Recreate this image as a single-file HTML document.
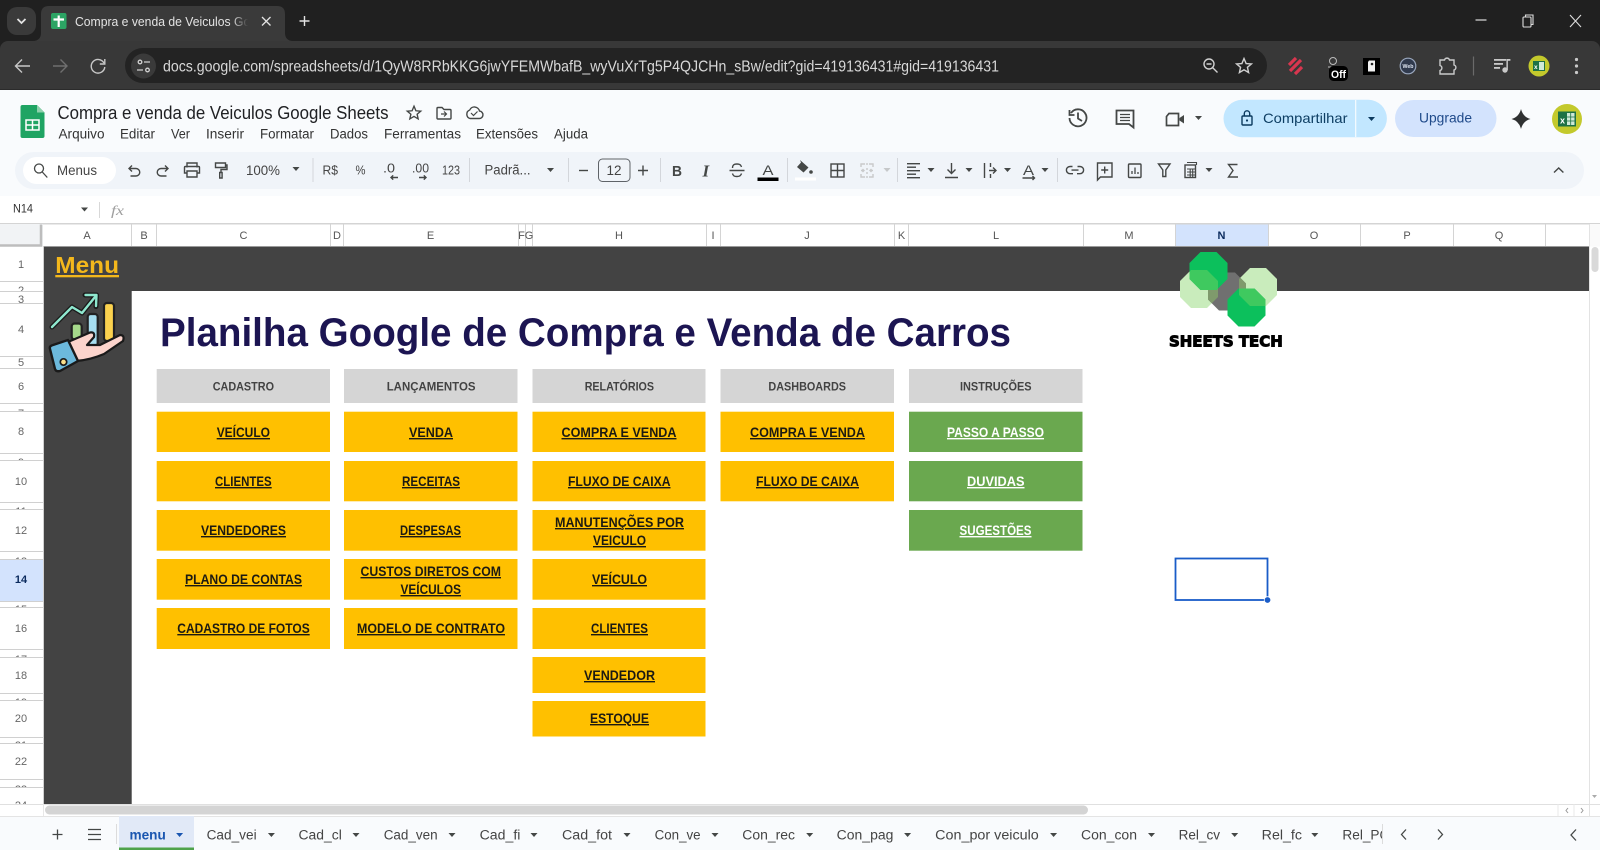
<!DOCTYPE html>
<html lang="pt-BR"><head><meta charset="utf-8"><title>Compra e venda de Veiculos Google Sheets</title>
<style>
html,body{margin:0;padding:0;width:1600px;height:850px;overflow:hidden;background:#fff}
svg{display:block}
text{font-family:"Liberation Sans",sans-serif}
.ch{font-size:11px;fill:#555;text-anchor:middle}
.rn{font-size:11px;fill:#666;text-anchor:middle}
.c{font-size:14px;font-weight:700;fill:#1c1a12;text-decoration:underline}
.g{font-size:12px;font-weight:700;fill:#434343}
.w{font-size:14px;font-weight:700;fill:#fff;text-decoration:underline}
.m{font-size:13.5px;fill:#333}
.t{font-size:13.5px;fill:#444}
.tb{font-size:13px;fill:#444}
.i{fill:none;stroke:#444746;stroke-width:1.4}
.d{fill:none;stroke:#c9cacb;stroke-width:1.4}
.ar{fill:#444746}
</style></head><body>
<svg width="1600" height="850" viewBox="0 0 1600 850" xmlns="http://www.w3.org/2000/svg">
<defs>
<path id="star" d="M0-8.500 2.400-2.800 8.400-2.300 3.900 1.500 5.200 7.400 0 4.300-5.200 7.400-3.900 1.500-8.400-2.300-2.400-2.800Z"/>
<path id="da" d="M-3.500-2H3.500L0 2Z"/>
<polygon id="oct" points="-19,-8 -8,-19 8,-19 19,-8 19,8 8,19 -8,19 -19,8"/>
<clipPath id="tabclip"><rect x="70" y="6" width="178" height="30"/></clipPath>
<clipPath id="sheetclip"><rect x="1330" y="816" width="52" height="34"/></clipPath>
<clipPath id="cTop"><use href="#oct" x="1208.500" y="271"/></clipPath>
<clipPath id="cBot"><use href="#oct" x="1246.500" y="307.500"/></clipPath>
<clipPath id="cGray"><use href="#oct" x="1227" y="291.500"/></clipPath>
<linearGradient id="fade" x1="0" x2="1"><stop offset="0" stop-color="#3a3a3a" stop-opacity="0"/><stop offset="1" stop-color="#3a3a3a"/></linearGradient>
</defs>

<!-- browser chrome -->
<rect width="1600" height="90" fill="#202020"/>
<rect y="41" width="1600" height="49" rx="8" fill="#383838"/>
<rect y="60" width="1600" height="30" fill="#383838"/>
<rect y="89" width="1600" height="1" fill="#2b2b2b"/>
<path d="M33 41C38 41 41 38 41 33V14Q41 6 49 6H277Q285 6 285 14V33C285 38 288 41 293 41Z" fill="#3a3a3a"/>
<rect x="7" y="7" width="29" height="28" rx="10" fill="#3a3a3a"/>
<path d="M17.500 19l4 4 4-4" fill="none" stroke="#e3e3e3" stroke-width="1.800"/>
<rect x="51" y="13" width="15.500" height="16" rx="2" fill="#2ca464"/>
<path d="M58.700 15.500V27M53.500 19.500H64" stroke="#fff" stroke-width="2.200"/>
<g clip-path="url(#tabclip)"><text x="75" y="26" font-size="13" fill="#e3e3e3" textLength="182" lengthAdjust="spacingAndGlyphs">Compra e venda de Veiculos Goo</text></g>
<rect x="232" y="8" width="16" height="26" fill="url(#fade)"/>
<path d="M262 17l8.500 8.500m0-8.500l-8.500 8.500" stroke="#e3e3e3" stroke-width="1.300"/>
<path d="M304.500 16v10m-5-5h10" stroke="#e3e3e3" stroke-width="1.400"/>
<path d="M1475.500 20h11" stroke="#ddd" stroke-width="1.200"/>
<g fill="none" stroke="#ddd" stroke-width="1.100"><rect x="1523" y="17" width="8" height="10" rx="1"/><path d="M1525.500 17v-2h7.500v9.500h-2"/><path d="M1570 15l11 12m0-12l-11 12"/></g>

<g fill="none" stroke="#c7c7c7" stroke-width="1.400"><path d="M30 66H16m6-6.500L15.500 66l6.500 6.500"/></g>
<g fill="none" stroke="#6f6f6f" stroke-width="1.400"><path d="M53 66h13.500m-6-6.500l6.500 6.500-6.500 6.500"/></g>
<g fill="none" stroke="#c7c7c7" stroke-width="1.400"><path d="M104 63a6.800 6.800 0 1 0 .8 4"/><path d="M104.800 59v5h-5"/></g>
<rect x="125" y="48" width="1142" height="35" rx="17.500" fill="#232323"/>
<circle cx="143.500" cy="66" r="12.500" fill="#3a3a3a"/>
<g fill="none" stroke="#d0d0d0" stroke-width="1.300"><circle cx="140" cy="62" r="1.800"/><path d="M144 62h6M137 70h6"/><circle cx="147.500" cy="70" r="1.800"/></g>
<text x="163" y="71.500" font-size="16" fill="#d8d8d8" textLength="836" lengthAdjust="spacingAndGlyphs">docs.google.com/spreadsheets/d/1QyW8RRbKKG6jwYFEMWbafB_wyVuXrTg5P4QJCHn_sBw/edit?gid=419136431#gid=419136431</text>
<g fill="none" stroke="#d0d0d0" stroke-width="1.400"><circle cx="1209" cy="64" r="5"/><path d="M1212.500 67.500l5 5M1206.500 64h5"/></g>
<g transform="translate(1244 66) scale(.88)"><use href="#star" fill="none" stroke="#d0d0d0" stroke-width="1.600"/></g>
<!-- extensions -->
<g fill="none" stroke="#d8364f" stroke-width="3.200"><path d="M1289 65l7-7M1290 71l11-11M1295 74l7-7"/></g>
<g fill="none" stroke="#bbb" stroke-width="1"><circle cx="1333" cy="61" r="3.500"/><path d="M1328 67h10"/></g>
<rect x="1329" y="66" width="19" height="15" rx="4.500" fill="#000"/>
<text x="1331" y="78" font-size="11" font-weight="700" fill="#fff" textLength="15" lengthAdjust="spacingAndGlyphs">Off</text>
<rect x="1363" y="58" width="17" height="17" fill="#000"/>
<path d="M1369 60.500h6v11h-7v-9.500z" fill="#f2f2f2"/><circle cx="1372" cy="64" r="1.300" fill="#222"/>
<circle cx="1408" cy="66" r="7.800" fill="#303a4d" stroke="#9aa7bd" stroke-width="1.200"/>
<text x="1402.500" y="68" font-size="5" font-weight="700" fill="#dfe6f2" textLength="11" lengthAdjust="spacingAndGlyphs">Web</text>
<path class="d" transform="translate(0 -1)" d="M1440 61h4.500a2.600 2.600 0 0 1 5 0h4.500v5a2.600 2.600 0 0 1 0 5v4h-14v-3.500a2.600 2.600 0 0 0 0-5z"/>
<path d="M1473.500 56.500v19" stroke="#6a6a6a" stroke-width="1.200"/>
<g fill="#c9c9c9"><rect x="1494" y="59" width="12" height="1.800"/><rect x="1494" y="63" width="9" height="1.800"/><rect x="1494" y="67" width="6" height="1.800"/><circle cx="1505" cy="70" r="2.700"/><rect x="1506.400" y="59" width="1.500" height="11"/><rect x="1506.400" y="59" width="4" height="1.800"/></g>
<circle cx="1539" cy="66" r="10.500" fill="#c3c92c"/><rect x="1533" y="61" width="12" height="10" fill="#1e7145"/><rect x="1539" y="62" width="5" height="8" fill="#cfe9d7"/><text x="1534" y="69" font-size="6.500" font-weight="700" fill="#fff">x</text>
<g fill="#c9c9c9"><circle cx="1576.500" cy="59.500" r="1.600"/><circle cx="1576.500" cy="66" r="1.600"/><circle cx="1576.500" cy="72.500" r="1.600"/></g>

<!-- sheets header -->
<rect y="90" width="1600" height="106" fill="#f9fbfd"/>
<path d="M22.500 105H37l7.500 7.500V136a2 2 0 0 1-2 2H22.500a2 2 0 0 1-2-2V107a2 2 0 0 1 2-2z" fill="#1fa463"/>
<path d="M37 105v7.500h7.500z" fill="#8ed1ac"/>
<g fill="none" stroke="#fff" stroke-width="1.500"><rect x="26" y="120" width="13" height="10"/><path d="M32.500 120v10M26 125h13"/></g>
<text x="57.500" y="119" font-size="18" fill="#202124" textLength="331" lengthAdjust="spacingAndGlyphs">Compra e venda de Veiculos Google Sheets</text>
<g transform="translate(414 113) scale(.8)"><use href="#star" fill="none" stroke="#444746" stroke-width="1.700"/></g>
<g class="i"><path d="M438 107.500h4l2 2h6a1 1 0 0 1 1 1v7.500a1 1 0 0 1-1 1h-12a1 1 0 0 1-1-1v-9.500a1 1 0 0 1 1-1z"/><path d="M441 114h5m-2-2.500l2.500 2.500-2.500 2.500" stroke-width="1.200"/></g>
<g class="i"><path d="M470 118.500h9a3.700 3.700 0 0 0 .5-7.400 5.200 5.200 0 0 0-9.800-1.100A4.500 4.500 0 0 0 470 118.500z"/><path d="M471 113l2.500 2.500 4-4" stroke-width="1.200"/></g>
<text class="m" x="58.500" y="138.500" textLength="46" lengthAdjust="spacingAndGlyphs">Arquivo</text>
<text class="m" x="120" y="138.500" textLength="35" lengthAdjust="spacingAndGlyphs">Editar</text>
<text class="m" x="171" y="138.500" textLength="19" lengthAdjust="spacingAndGlyphs">Ver</text>
<text class="m" x="206" y="138.500" textLength="38" lengthAdjust="spacingAndGlyphs">Inserir</text>
<text class="m" x="260" y="138.500" textLength="54" lengthAdjust="spacingAndGlyphs">Formatar</text>
<text class="m" x="330" y="138.500" textLength="38" lengthAdjust="spacingAndGlyphs">Dados</text>
<text class="m" x="384" y="138.500" textLength="77" lengthAdjust="spacingAndGlyphs">Ferramentas</text>
<text class="m" x="476" y="138.500" textLength="62" lengthAdjust="spacingAndGlyphs">Extensões</text>
<text class="m" x="554" y="138.500" textLength="34" lengthAdjust="spacingAndGlyphs">Ajuda</text>

<!-- top right -->
<g fill="none" stroke="#444746" stroke-width="1.800"><path d="M1071 113A8.500 8.500 0 1 1 1069.500 118"/><path d="M1069.500 110v5h5M1078 112.500v6l4 2.500"/></g>
<g fill="none" stroke="#444746" stroke-width="1.800"><path d="M1116.500 110.500H1133.500V127.500L1129 124H1116.500Z"/><path d="M1120 114.500h10M1120 117.500h10M1120 120.500h10" stroke-width="1.300"/></g>
<path d="M1169 113.500h9.500v12h-12v-9z" fill="none" stroke="#444746" stroke-width="1.700"/><path d="M1179.500 118l4.500-3v8.500l-4.500-3z" fill="#444746"/>
<use href="#da" x="1198.500" y="118" class="ar"/>
<path d="M1223.500 118.500a18.700 18.700 0 0 1 18.700-18.700h126a18.700 18.700 0 0 1 18.700 18.700 18.700 18.700 0 0 1-18.700 18.700h-126a18.700 18.700 0 0 1-18.700-18.700z" fill="#c2e7ff"/>
<rect x="1355" y="100" width="1.300" height="37" fill="#f2faff"/>
<rect x="1242" y="116" width="10" height="9" rx="1" fill="none" stroke="#0b3a5e" stroke-width="1.400"/><path d="M1244.300 116v-2.500a2.700 2.700 0 0 1 5.400 0v2.500" fill="none" stroke="#0b3a5e" stroke-width="1.400"/><circle cx="1247" cy="120.500" r="1.100" fill="#0b3a5e"/>
<text x="1263" y="123" font-size="14" fill="#0d3e63" textLength="84.500" lengthAdjust="spacingAndGlyphs">Compartilhar</text>
<use href="#da" x="1371.500" y="119" fill="#0b3a5e"/>
<rect x="1395" y="100" width="101.500" height="37" rx="18.500" fill="#d3e3fd"/>
<text x="1419" y="122.500" font-size="14" fill="#1f4a8a" textLength="53" lengthAdjust="spacingAndGlyphs">Upgrade</text>
<path d="M1521 109Q1523 117 1530.500 119 1523 121 1521 129 1519 121 1511.500 119 1519 117 1521 109Z" fill="#2f3132"/>
<circle cx="1567" cy="119" r="15" fill="#c3c92c"/><rect x="1558" y="111.500" width="18" height="15" fill="#1e7145"/><g fill="#cfe9d7"><rect x="1567" y="113" width="7.500" height="12"/></g><path d="M1570.700 113v12M1567 117h7.500M1567 121h7.500" stroke="#1e7145" stroke-width=".8"/><text x="1560" y="123.500" font-size="9" font-weight="700" fill="#fff">x</text>

<!-- toolbar -->
<rect x="15" y="152" width="1569" height="37" rx="18.500" fill="#f0f4f9"/>
<rect x="23" y="157" width="93" height="27" rx="13.500" fill="#fff"/>
<g fill="none" stroke="#444746" stroke-width="1.300"><circle cx="39" cy="168.500" r="4.500"/><path d="M42.300 172l5 5.500"/></g>
<text class="t" x="57" y="175" textLength="40" lengthAdjust="spacingAndGlyphs">Menus</text>
<g class="i">
<path d="M129 168.500h7a3.700 3.700 0 0 1 0 7.500h-5.500m1.500-10.500l-3 3 3 3"/>
<path d="M167 168.500h-6a3.700 3.700 0 0 0 0 7.500h5.500m-1.500-10.500l3 3-3 3"/>
<path d="M187 167.500v-4.500h10v4.500M187 173h-2.500v-5.500a1 1 0 0 1 1-1h13a1 1 0 0 1 1 1v5.500H197M187 171h10v6h-10z"/>
<path d="M215.500 163h10v4.500h-10zM225.500 165h1.500v4.500h-6v3M219.700 172.500h2.400v5.500h-2.400z"/>
</g>
<text class="t" x="246" y="175" textLength="34" lengthAdjust="spacingAndGlyphs">100%</text>
<use href="#da" x="296" y="169" class="ar"/>
<rect x="312.500" y="158" width="1" height="24" fill="#d3d6db"/>
<text class="tb" x="322.500" y="174.500" font-size="12.500" textLength="15.500" lengthAdjust="spacingAndGlyphs">R$</text>
<text class="tb" x="355.500" y="174.500" textLength="10" lengthAdjust="spacingAndGlyphs">%</text>
<text class="tb" x="383" y="172.500" font-size="12" textLength="12" lengthAdjust="spacingAndGlyphs">.0</text>
<path d="M398 177.500h-7m2.200-2.100l-2.200 2.100 2.200 2.100" class="i" stroke-width="1.200"/>
<text class="tb" x="412" y="172.500" font-size="12" textLength="17" lengthAdjust="spacingAndGlyphs">.00</text>
<path d="M419 177.500h7m-2.200-2.100l2.200 2.100-2.200 2.100" class="i" stroke-width="1.200"/>
<text class="tb" x="442" y="174.500" font-size="12" textLength="18" lengthAdjust="spacingAndGlyphs">123</text>
<rect x="469" y="158" width="1" height="24" fill="#d3d6db"/>
<text class="t" x="484.500" y="174.500" textLength="46" lengthAdjust="spacingAndGlyphs">Padrã...</text>
<use href="#da" x="550.500" y="170" class="ar"/>
<rect x="568" y="158" width="1" height="24" fill="#d3d6db"/>
<path d="M579 170.500h9" stroke="#444746" stroke-width="1.400"/>
<rect x="598.500" y="159" width="31.500" height="22.500" rx="4" fill="none" stroke="#5f6368" stroke-width="1"/>
<text class="t" x="606.500" y="175" font-size="13.500" textLength="15" lengthAdjust="spacingAndGlyphs">12</text>
<path d="M638 170.500h10M643 165.500v10" stroke="#444746" stroke-width="1.400"/>
<rect x="660" y="158" width="1" height="24" fill="#d3d6db"/>
<text x="672" y="176" font-size="15" font-weight="700" fill="#444746" textLength="10" lengthAdjust="spacingAndGlyphs">B</text>
<text x="702.500" y="176.500" font-size="17" font-style="italic" font-weight="700" style="font-family:'Liberation Serif',serif" fill="#444746">I</text>
<g class="i"><path d="M729.500 170.500h15M732.500 168c0-3 1.500-4 4.500-4s4 1 4.500 3M732.500 173.500c.5 2.500 2 3 4.500 3s4-1 4.500-3"/></g>
<text x="762.500" y="175" font-size="13.500" fill="#444746" textLength="11" lengthAdjust="spacingAndGlyphs">A</text>
<rect x="757.500" y="177.500" width="21" height="3.500" fill="#000"/>
<rect x="787" y="158" width="1" height="24" fill="#d3d6db"/>
<path d="M800 160l8.500 7.500-5 5-6.500-5.500 4-4.500z" fill="#444746"/><circle cx="811" cy="172" r="1.800" fill="#444746"/><rect x="795" y="177.500" width="21" height="3" fill="#fff"/>
<g class="i"><rect x="831" y="164" width="13" height="13"/><path d="M837.500 164v13M831 170.500h13"/></g>
<path class="d" d="M865 164h-4v3M861 174v3h4M869 164h4v3M873 174v3h-4M861 170.500h3m-1.500-1.500l1.500 1.500-1.500 1.500M873 170.500h-3m1.500-1.500l-1.500 1.500 1.500 1.500M867 163v2M867 168v2M867 172v2M867 176v2" stroke-width="1.200"/>
<use href="#da" x="887" y="170" fill="#c6c8ca"/>
<rect x="897" y="158" width="1" height="24" fill="#d3d6db"/>
<g fill="#444746"><rect x="907" y="163" width="13" height="1.400"/><rect x="907" y="166.500" width="9" height="1.400"/><rect x="907" y="170" width="13" height="1.400"/><rect x="907" y="173.500" width="9" height="1.400"/><rect x="907" y="177" width="13" height="1.400"/></g>
<use href="#da" x="931" y="170" class="ar"/>
<path d="M951.500 163v10m-4-3.500l4 4 4-4M945 177.500h13" class="i"/>
<use href="#da" x="969" y="170" class="ar"/>
<path d="M984.500 163v15M989 170.500h7m-3-3l3 3-3 3M990.500 163v4M990.500 174v4" class="i"/>
<use href="#da" x="1007.500" y="170" class="ar"/>
<text x="1023" y="175" font-size="13.500" fill="#444746" textLength="11" lengthAdjust="spacingAndGlyphs">A</text><path d="M1022.500 178h12m-2-2l2 2-2 2" class="i" stroke-width="1.100"/>
<use href="#da" x="1045" y="170" class="ar"/>
<rect x="1057" y="158" width="1" height="24" fill="#d3d6db"/>
<g class="i"><path d="M1072.500 166.500h-2.500a3.600 3.600 0 0 0 0 7.200h3M1077.500 166.500h2.500a3.600 3.600 0 0 1 0 7.200h-3M1071.500 170.100h7"/>
<path d="M1097.500 163h14.500v14h-11.500l-3 3zM1104.700 166.500v7M1101.200 170h7"/>
<rect x="1128.500" y="164" width="12.500" height="13.500" rx="1"/><path d="M1132 174v-3M1135 174v-6.500M1138 174v-2" stroke-width="1.300"/>
<path d="M1158.500 164h11.500l-4.200 6v6.500h-3V170z"/>
<rect x="1185" y="165" width="10.500" height="12.500"/><path d="M1187 162.500h9.500v2.500M1187 169h8.500M1187 172h8.500M1187 175h8.500M1190.200 169v8M1192.700 169v8" stroke-width="1.100"/></g>
<use href="#da" x="1209" y="170" class="ar"/>
<path d="M1237.500 164.500h-9l4.500 6-4.500 6.500h9.500" class="i"/>
<path d="M1554 172.500l4.700-4.500 4.700 4.500" class="i"/>

<!-- formula bar -->
<text x="13" y="212.500" font-size="11.500" fill="#333" textLength="20" lengthAdjust="spacingAndGlyphs">N14</text>
<use href="#da" x="84.500" y="209.500" class="ar"/>
<rect x="99" y="202" width="1" height="16" fill="#d8d8d8"/>
<text x="111" y="215" font-size="14" font-style="italic" style="font-family:'Liberation Serif',serif" fill="#a0a0a0" textLength="13" lengthAdjust="spacingAndGlyphs">fx</text>
<rect y="223" width="1600" height="1.500" fill="#d4d4d4"/>

<!-- grid headers -->
<rect y="224" width="43" height="22.500" fill="#f1f3f5"/>
<path d="M41 224.500v21H0" stroke="#bdbdbd" stroke-width="2.500" fill="none"/>
<rect x="1175.500" y="224.500" width="92.500" height="22" fill="#d3e3fd"/>
<rect x="1589" y="224" width="11" height="22.500" fill="#fafafa"/>
<g fill="#d4d4d4"><rect x="131" y="224" width="1" height="22"/><rect x="156" y="224" width="1" height="22"/><rect x="330" y="224" width="1" height="22"/><rect x="343" y="224" width="1" height="22"/><rect x="518" y="224" width="1" height="22"/><rect x="525" y="224" width="1" height="22"/><rect x="532" y="224" width="1" height="22"/><rect x="706" y="224" width="1" height="22"/><rect x="720" y="224" width="1" height="22"/><rect x="894" y="224" width="1" height="22"/><rect x="908" y="224" width="1" height="22"/><rect x="1083" y="224" width="1" height="22"/><rect x="1175" y="224" width="1" height="22"/><rect x="1268" y="224" width="1" height="22"/><rect x="1360" y="224" width="1" height="22"/><rect x="1453" y="224" width="1" height="22"/><rect x="1545" y="224" width="1" height="22"/></g>
<text class="ch" x="87" y="239">A</text><text class="ch" x="144" y="239">B</text><text class="ch" x="243.500" y="239">C</text><text class="ch" x="337" y="239">D</text><text class="ch" x="430.500" y="239">E</text><text class="ch" x="521.500" y="239">F</text><text class="ch" x="529" y="239">G</text><text class="ch" x="619" y="239">H</text><text class="ch" x="713" y="239">I</text><text class="ch" x="807" y="239">J</text><text class="ch" x="901.500" y="239">K</text><text class="ch" x="996" y="239">L</text><text class="ch" x="1129" y="239">M</text><text class="ch" x="1221.500" y="239" font-weight="700" style="fill:#0b2b5e">N</text><text class="ch" x="1314" y="239">O</text><text class="ch" x="1407" y="239">P</text><text class="ch" x="1499" y="239">Q</text>

<!-- sheet body -->
<rect x="43" y="246.500" width="1546" height="44.500" fill="#434343"/>
<rect x="43" y="246.500" width="88.500" height="557.500" fill="#434343"/>
<rect x="131" y="291" width="1" height="513" fill="#7a7a7a"/>
<rect x="43" y="246" width="1546" height="1" fill="#9a9a9a"/>
<rect x="43" y="246" width="1" height="558" fill="#d0d0d0"/>

<!-- row header -->
<rect y="559" width="43" height="42" fill="#d3e3fd"/>
<g fill="#d0d0d0"><rect y="281" width="43" height="1"/><rect y="291" width="43" height="1"/><rect y="303" width="43" height="1"/><rect y="356" width="43" height="1"/><rect y="368" width="43" height="1"/><rect y="403" width="43" height="1"/><rect y="411" width="43" height="1"/><rect y="453" width="43" height="1"/><rect y="460" width="43" height="1"/><rect y="502" width="43" height="1"/><rect y="509" width="43" height="1"/><rect y="551" width="43" height="1"/><rect y="559" width="43" height="1"/><rect y="601" width="43" height="1"/><rect y="607" width="43" height="1"/><rect y="649" width="43" height="1"/><rect y="657" width="43" height="1"/><rect y="693" width="43" height="1"/><rect y="700" width="43" height="1"/><rect y="737" width="43" height="1"/><rect y="743" width="43" height="1"/><rect y="779" width="43" height="1"/><rect y="787" width="43" height="1"/></g>
<text class="rn" x="21" y="268">1</text>
<svg y="281" width="43" height="10"><text class="rn" x="21" y="13">2</text></svg>
<svg y="291" width="43" height="12"><text class="rn" x="21" y="12">3</text></svg>
<text class="rn" x="21" y="333">4</text>
<text class="rn" x="21" y="366">5</text>
<text class="rn" x="21" y="390">6</text>
<svg y="403" width="43" height="8"><text class="rn" x="21" y="14">7</text></svg>
<text class="rn" x="21" y="435">8</text>
<svg y="453" width="43" height="7"><text class="rn" x="21" y="13">9</text></svg>
<text class="rn" x="21" y="485">10</text>
<svg y="502" width="43" height="7"><text class="rn" x="21" y="13">11</text></svg>
<text class="rn" x="21" y="534">12</text>
<svg y="551" width="43" height="8"><text class="rn" x="21" y="14">13</text></svg>
<text class="rn" x="21" y="583" font-weight="700" style="fill:#0b2b5e">14</text>
<svg y="601" width="43" height="6"><text class="rn" x="21" y="12">15</text></svg>
<text class="rn" x="21" y="632">16</text>
<svg y="649" width="43" height="8"><text class="rn" x="21" y="14">17</text></svg>
<text class="rn" x="21" y="679">18</text>
<svg y="693" width="43" height="7"><text class="rn" x="21" y="13">19</text></svg>
<text class="rn" x="21" y="722">20</text>
<svg y="737" width="43" height="6"><text class="rn" x="21" y="12">21</text></svg>
<text class="rn" x="21" y="765">22</text>
<svg y="779" width="43" height="8"><text class="rn" x="21" y="14">23</text></svg>
<svg y="787" width="43" height="17"><text class="rn" x="21" y="22">24</text></svg>

<text x="55.300" y="273" font-size="23" font-weight="700" fill="#f4b81c" text-decoration="underline" textLength="63.700" lengthAdjust="spacingAndGlyphs">Menu</text>
<!-- hand illustration -->
<g stroke-linejoin="round" stroke-linecap="round">
<polyline points="52,327 72,307 82,313 95,297" fill="none" stroke="#1a1a1a" stroke-width="5"/>
<path d="M85 295H96.500L96 306.500" fill="none" stroke="#1a1a1a" stroke-width="5"/>
<polyline points="52,327 72,307 82,313 95,297" fill="none" stroke="#8fe8cf" stroke-width="2.400"/>
<path d="M85.500 295H96.500L96 306" fill="none" stroke="#8fe8cf" stroke-width="2.400"/>
<rect x="71.700" y="323.500" width="10" height="16" rx="3" fill="#a5d98a" stroke="#222" stroke-width="2.200"/>
<rect x="87.700" y="314" width="10" height="32" rx="3" fill="#a6def0" stroke="#222" stroke-width="2.200"/>
<rect x="104" y="303" width="10" height="38" rx="3" fill="#fbd24e" stroke="#222" stroke-width="2.200"/>
<path d="M68 342L90 332.500Q95 331.500 94 337L87 345 100 345 120 335Q125 335 123 341L104 354Q90 360 76 361Z" fill="#fcd4cc" stroke="#1a1a1a" stroke-width="2.200"/>
<path d="M50 349Q49 346 53 345L68 340 78 361 60 371Q56 372 55 369Z" fill="#6cb9dc" stroke="#1a1a1a" stroke-width="2.400"/>
<circle cx="63.500" cy="362" r="3.200" fill="#fbe08a" stroke="#1a1a1a" stroke-width="1.700"/>
</g>

<!-- title -->
<text x="160" y="346" font-size="40" font-weight="700" fill="#1c1552" textLength="851" lengthAdjust="spacingAndGlyphs">Planilha Google de Compra e Venda de Carros</text>

<!-- logo -->
<use href="#oct" x="1199" y="289" fill="#c9ecbc"/>
<use href="#oct" x="1258" y="287" fill="#c9ecbc"/>
<use href="#oct" x="1227" y="291.500" fill="#707070"/>
<g clip-path="url(#cGray)"><use href="#oct" x="1199" y="289" fill="#7f9a6c"/><use href="#oct" x="1258" y="287" fill="#7f9a6c"/></g>
<use href="#oct" x="1208.500" y="271" fill="#0cc05c"/>
<g clip-path="url(#cTop)"><use href="#oct" x="1199" y="289" fill="#3fc95f"/></g>
<use href="#oct" x="1246.500" y="307.500" fill="#0cc05c"/>
<g clip-path="url(#cBot)"><use href="#oct" x="1258" y="287" fill="#3fc95f"/></g>
<text x="1169" y="346.500" font-size="15" font-weight="700" style="font-family:'DejaVu Sans',sans-serif" fill="#000" stroke="#000" stroke-width="1" textLength="113.700" lengthAdjust="spacingAndGlyphs">SHEETS TECH</text>

<!-- section headers -->
<g fill="#d5d5d5"><rect x="156.700" y="369" width="173.300" height="34"/><rect x="344" y="369" width="173.500" height="34"/><rect x="532.500" y="369" width="173" height="34"/><rect x="720.500" y="369" width="173.500" height="34"/><rect x="909" y="369" width="173.500" height="34"/></g>
<text class="g" x="212.700" y="390.500" textLength="61.300" lengthAdjust="spacingAndGlyphs">CADASTRO</text>
<text class="g" x="386.700" y="390.500" textLength="88.800" lengthAdjust="spacingAndGlyphs">LANÇAMENTOS</text>
<text class="g" x="584.700" y="390.500" textLength="69.300" lengthAdjust="spacingAndGlyphs">RELATÓRIOS</text>
<text class="g" x="768.400" y="390.500" textLength="77.600" lengthAdjust="spacingAndGlyphs">DASHBOARDS</text>
<text class="g" x="960" y="390.500" textLength="71.600" lengthAdjust="spacingAndGlyphs">INSTRUÇÕES</text>

<!-- yellow cards -->
<g fill="#ffc000">
<rect x="156.700" y="411.700" width="173.300" height="40.300"/><rect x="156.700" y="461" width="173.300" height="40.300"/><rect x="156.700" y="510" width="173.300" height="40.700"/><rect x="156.700" y="559" width="173.300" height="40.700"/><rect x="156.700" y="608" width="173.300" height="41"/>
<rect x="344" y="411.700" width="173.500" height="40.300"/><rect x="344" y="461" width="173.500" height="40.300"/><rect x="344" y="510" width="173.500" height="40.700"/><rect x="344" y="559" width="173.500" height="40.700"/><rect x="344" y="608" width="173.500" height="41"/>
<rect x="532.500" y="411.700" width="173" height="40.300"/><rect x="532.500" y="461" width="173" height="40.300"/><rect x="532.500" y="510" width="173" height="40.700"/><rect x="532.500" y="559" width="173" height="40.700"/><rect x="532.500" y="608" width="173" height="41"/><rect x="532.500" y="657" width="173" height="36"/><rect x="532.500" y="701" width="173" height="35.500"/>
<rect x="720.500" y="411.700" width="173.500" height="40.300"/><rect x="720.500" y="461" width="173.500" height="40.300"/>
</g>
<g fill="#6aa84f"><rect x="909" y="411.700" width="173.500" height="40.300"/><rect x="909" y="461" width="173.500" height="40.300"/><rect x="909" y="510" width="173.500" height="40.700"/></g>

<text class="c" x="216.700" y="437" textLength="53.300" lengthAdjust="spacingAndGlyphs">VEÍCULO</text>
<text class="c" x="215" y="486" textLength="56.700" lengthAdjust="spacingAndGlyphs">CLIENTES</text>
<text class="c" x="201" y="535" textLength="85" lengthAdjust="spacingAndGlyphs">VENDEDORES</text>
<text class="c" x="185" y="584" textLength="117" lengthAdjust="spacingAndGlyphs">PLANO DE CONTAS</text>
<text class="c" x="177.300" y="633" textLength="132.400" lengthAdjust="spacingAndGlyphs">CADASTRO DE FOTOS</text>

<text class="c" x="409" y="437" textLength="44" lengthAdjust="spacingAndGlyphs">VENDA</text>
<text class="c" x="402" y="486" textLength="58" lengthAdjust="spacingAndGlyphs">RECEITAS</text>
<text class="c" x="400" y="535" textLength="61" lengthAdjust="spacingAndGlyphs">DESPESAS</text>
<text class="c" x="360.500" y="576" textLength="140.500" lengthAdjust="spacingAndGlyphs">CUSTOS DIRETOS COM</text>
<text class="c" x="400.500" y="594" textLength="60.500" lengthAdjust="spacingAndGlyphs">VEÍCULOS</text>
<text class="c" x="357" y="633" textLength="148" lengthAdjust="spacingAndGlyphs">MODELO DE CONTRATO</text>

<text class="c" x="561.500" y="437" textLength="115" lengthAdjust="spacingAndGlyphs">COMPRA E VENDA</text>
<text class="c" x="568" y="486" textLength="102.500" lengthAdjust="spacingAndGlyphs">FLUXO DE CAIXA</text>
<text class="c" x="555" y="527" textLength="129" lengthAdjust="spacingAndGlyphs">MANUTENÇÕES POR</text>
<text class="c" x="593" y="545" textLength="53" lengthAdjust="spacingAndGlyphs">VEICULO</text>
<text class="c" x="592" y="584" textLength="55" lengthAdjust="spacingAndGlyphs">VEÍCULO</text>
<text class="c" x="591" y="633" textLength="57" lengthAdjust="spacingAndGlyphs">CLIENTES</text>
<text class="c" x="584" y="680" textLength="71" lengthAdjust="spacingAndGlyphs">VENDEDOR</text>
<text class="c" x="590" y="723" textLength="59" lengthAdjust="spacingAndGlyphs">ESTOQUE</text>

<text class="c" x="750" y="437" textLength="115" lengthAdjust="spacingAndGlyphs">COMPRA E VENDA</text>
<text class="c" x="756" y="486" textLength="103" lengthAdjust="spacingAndGlyphs">FLUXO DE CAIXA</text>

<text class="w" x="947" y="437" textLength="97" lengthAdjust="spacingAndGlyphs">PASSO A PASSO</text>
<text class="w" x="967" y="486" textLength="57.500" lengthAdjust="spacingAndGlyphs">DUVIDAS</text>
<text class="w" x="959.500" y="535" textLength="72" lengthAdjust="spacingAndGlyphs">SUGESTÕES</text>

<!-- selected cell -->
<rect x="1175.500" y="558.500" width="92" height="41.500" fill="none" stroke="#1a5cc8" stroke-width="1.800"/>
<circle cx="1267.500" cy="600" r="3.300" fill="#1a5cc8" stroke="#fff" stroke-width=".8"/>

<!-- scrollbars -->
<rect x="1589" y="224" width="1" height="592" fill="#e3e3e3"/>
<rect x="1591.500" y="247" width="7" height="25" rx="3.500" fill="#d9d9d9"/>
<path d="M1592 795h5l-2.500 3z" fill="#aaa"/>
<rect y="804" width="1600" height="1" fill="#e0e0e0"/>
<rect x="43" y="804" width="1" height="12" fill="#e8e8e8"/>
<rect x="45" y="805.500" width="1043" height="9" rx="4.500" fill="#d4d4d4"/>
<path d="M1568 808l-2 2.500 2 2.500M1581 808l2 2.500-2 2.500" fill="none" stroke="#999" stroke-width="1"/>
<path d="M1558 804v12M1574 804v12" stroke="#e8e8e8"/>

<!-- sheet tabs -->
<rect y="816" width="1600" height="34" fill="#f9fbfd"/>
<rect y="816" width="1600" height="1" fill="#e4e4e4"/>
<path d="M52.500 834.500h10M57.500 829.500v10" stroke="#444746" stroke-width="1.300"/>
<path d="M88 829.500h13M88 834.500h13M88 839.500h13" stroke="#444746" stroke-width="1.300"/>
<rect x="116" y="824" width="1" height="20" fill="#dcdcdc"/>
<rect x="119" y="816" width="75" height="34" fill="#e1e9f7"/>
<rect x="119" y="847.500" width="75" height="2.500" fill="#4ea24a"/>
<text x="129.500" y="839.500" font-size="13.500" font-weight="700" fill="#1a56b0" textLength="36.300" lengthAdjust="spacingAndGlyphs">menu</text>
<use href="#da" x="179.600" y="835" fill="#1a56b0"/>
<text class="t" x="206.600" y="839.500" textLength="50" lengthAdjust="spacingAndGlyphs">Cad_vei</text><use href="#da" x="271.400" y="835" class="ar"/>
<text class="t" x="298.500" y="839.500" textLength="43.300" lengthAdjust="spacingAndGlyphs">Cad_cl</text><use href="#da" x="356" y="835" class="ar"/>
<text class="t" x="383.700" y="839.500" textLength="54" lengthAdjust="spacingAndGlyphs">Cad_ven</text><use href="#da" x="452" y="835" class="ar"/>
<text class="t" x="479.600" y="839.500" textLength="40.800" lengthAdjust="spacingAndGlyphs">Cad_fi</text><use href="#da" x="534" y="835" class="ar"/>
<text class="t" x="562" y="839.500" textLength="50" lengthAdjust="spacingAndGlyphs">Cad_fot</text><use href="#da" x="627" y="835" class="ar"/>
<text class="t" x="654.600" y="839.500" textLength="46" lengthAdjust="spacingAndGlyphs">Con_ve</text><use href="#da" x="715" y="835" class="ar"/>
<text class="t" x="742.300" y="839.500" textLength="52.700" lengthAdjust="spacingAndGlyphs">Con_rec</text><use href="#da" x="809.700" y="835" class="ar"/>
<text class="t" x="836.700" y="839.500" textLength="56.700" lengthAdjust="spacingAndGlyphs">Con_pag</text><use href="#da" x="907.600" y="835" class="ar"/>
<text class="t" x="935.200" y="839.500" textLength="103.600" lengthAdjust="spacingAndGlyphs">Con_por veiculo</text><use href="#da" x="1053.600" y="835" class="ar"/>
<text class="t" x="1081" y="839.500" textLength="56" lengthAdjust="spacingAndGlyphs">Con_con</text><use href="#da" x="1151.500" y="835" class="ar"/>
<text class="t" x="1178.600" y="839.500" textLength="41.400" lengthAdjust="spacingAndGlyphs">Rel_cv</text><use href="#da" x="1234.700" y="835" class="ar"/>
<text class="t" x="1261.700" y="839.500" textLength="40.300" lengthAdjust="spacingAndGlyphs">Rel_fc</text><use href="#da" x="1314.800" y="835" class="ar"/>
<g clip-path="url(#sheetclip)"><text class="t" x="1342.400" y="839.500" textLength="47" lengthAdjust="spacingAndGlyphs">Rel_PC</text></g>
<rect x="1382" y="824" width="1" height="20" fill="#dcdcdc"/>
<path d="M1406 829.500l-4.500 5 4.500 5M1438 829.500l4.500 5-4.500 5M1576 829.500l-5 5.500 5 5.500" fill="none" stroke="#444746" stroke-width="1.300"/>
</svg>
</body></html>
